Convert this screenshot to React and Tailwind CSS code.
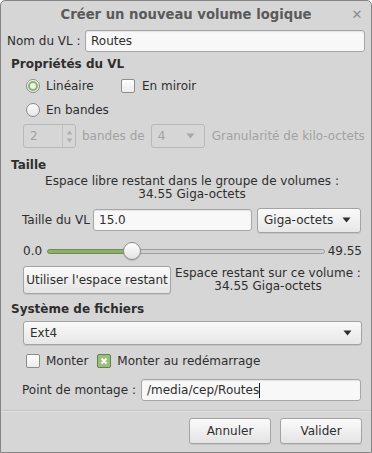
import React from 'react';

const font = { fontFamily: '"DejaVu Sans", Verdana, sans-serif' };

function Radio({ checked }) {
  return (
    <span className="w-[14px] h-[14px] rounded-full border border-[#8c8c8c] bg-gradient-to-b from-[#fbfbfb] to-[#e6e6e6] flex items-center justify-center shrink-0">
      {checked && (
        <span className="w-[10px] h-[10px] rounded-full border-[2px] border-[#8db36b] bg-[#eef3e8]" />
      )}
    </span>
  );
}

function Check({ checked }) {
  if (checked) {
    return (
      <span className="w-[14px] h-[14px] rounded-[2px] border border-[#62804a] bg-[#9cbf80] flex items-center justify-center shrink-0">
        <svg width="8" height="8" viewBox="0 0 8 8">
          <path d="M1.5 1.5 L6.5 6.5 M6.5 1.5 L1.5 6.5" stroke="#ffffff" strokeWidth="1.8" />
        </svg>
      </span>
    );
  }
  return <span className="w-[14px] h-[14px] rounded-[2px] border border-[#8c8c8c] bg-gradient-to-b from-[#fdfdfd] to-[#ececec] shrink-0" />;
}

function Arrow({ color = '#333' }) {
  return (
    <svg width="9" height="6" viewBox="0 0 9 6" className="shrink-0">
      <path d="M0.5 0.5 L8.5 0.5 L4.5 5.5 Z" fill={color} />
    </svg>
  );
}

function Combo({ label, className, disabled }) {
  return (
    <div
      className={`flex items-center justify-between rounded-[3px] border px-[6px] ${
        disabled
          ? 'border-[#b8b8b8] bg-[#d6d6d6] text-[#a2a2a2]'
          : 'border-[#a3a3a3] bg-gradient-to-b from-[#fafafa] to-[#e7e7e7] text-[#2e2e2e] shadow-[0_1px_0_rgba(0,0,0,0.08)]'
      } ${className}`}
    >
      <span>{label}</span>
      <span className="pr-[3px]">
        <Arrow color={disabled ? '#a8a8a8' : '#2e2e2e'} />
      </span>
    </div>
  );
}

function Field({ value, className, cursor }) {
  return (
    <div className={`flex items-center rounded-[3px] border border-[#a6a6a6] bg-[#f8f8f8] px-[5px] shadow-[inset_0_1px_1px_rgba(0,0,0,0.08)] ${className}`}>
      <span>{value}</span>
      {cursor && <span className="w-px h-[15px] bg-[#222]" />}
    </div>
  );
}

function Button({ children, className }) {
  return (
    <div className={`flex items-center justify-center rounded-[3px] border border-[#a3a3a3] bg-gradient-to-b from-[#fbfbfb] to-[#e4e4e4] shadow-[0_1px_0_rgba(0,0,0,0.08)] ${className}`}>
      {children}
    </div>
  );
}

export default function App() {
  return (
    <div
      style={font}
      className="w-[372px] h-[453px] bg-[#d6d6d6] border border-[#858585] rounded-t-[5px] text-[12px] text-[#2e2e2e] flex flex-col overflow-hidden"
    >
      {/* barre de titre */}
      <div className="h-[27px] flex items-center shrink-0">
        <div className="w-[28px]" />
        <div className="flex-1 text-center font-bold text-[13.2px] text-[#5a5a5a]">Créer un nouveau volume logique</div>
        <div className="w-[28px] flex justify-center text-[#8c8c8c] font-bold text-[13px]">✕</div>
      </div>

      {/* nom */}
      <div className="h-[26px] flex items-center pl-[6px] pr-[6px] shrink-0">
        <span className="w-[78px]">Nom du VL :</span>
        <Field value="Routes" className="flex-1 h-[22px]" />
      </div>

      <div className="h-[20px] flex items-center pl-[10px] font-bold shrink-0">Propriétés du VL</div>

      <div className="h-[23px] flex items-center pl-[25px] shrink-0">
        <Radio checked />
        <span className="ml-[6px] w-[75px]">Linéaire</span>
        <Check />
        <span className="ml-[7px]">En miroir</span>
      </div>

      <div className="h-[26px] flex items-center pl-[25px] shrink-0">
        <Radio />
        <span className="ml-[6px]">En bandes</span>
      </div>

      <div className="h-[26px] flex items-center pl-[22px] text-[#a2a2a2] shrink-0">
        <div className="w-[53px] h-[24px] rounded-[3px] border border-[#b8b8b8] flex">
          <span className="flex-1 flex items-center pl-[6px]">2</span>
          <div className="w-[13px] border-l border-[#c2c2c2] flex flex-col items-center justify-center gap-[3px]">
            <svg width="7" height="5" viewBox="0 0 7 5"><path d="M0.5 4.5 L3.5 0.5 L6.5 4.5 Z" fill="#b0b0b0" /></svg>
            <svg width="7" height="5" viewBox="0 0 7 5"><path d="M0.5 0.5 L3.5 4.5 L6.5 0.5 Z" fill="#b0b0b0" /></svg>
          </div>
        </div>
        <span className="ml-[6px]">bandes de</span>
        <Combo label="4" disabled className="ml-[6px] w-[54px] h-[24px]" />
        <span className="ml-[7px]">Granularité de kilo-octets</span>
      </div>

      <div className="mt-[6px] h-[20px] flex items-center pl-[10px] font-bold shrink-0">Taille</div>

      <div className="h-[26px] pl-[21px] pr-[9px] flex flex-col items-center justify-center leading-[13px] shrink-0">
        <span>Espace libre restant dans le groupe de volumes :</span>
        <span>34.55 Giga-octets</span>
      </div>

      <div className="mt-[7px] h-[24px] flex items-center pl-[21px] pr-[10px] shrink-0">
        <span className="w-[71px]">Taille du VL</span>
        <Field value="15.0" className="w-[159px] h-[22px]" />
        <Combo label="Giga-octets" className="ml-[5px] flex-1 h-[25px]" />
      </div>

      <div className="mt-[9px] h-[20px] flex items-center pl-[22px] pr-[9px] shrink-0">
        <span>0.0</span>
        <div className="ml-[5px] flex-1 flex items-center h-[18px]">
          <div className="w-[85px] h-[5px] rounded-l-full bg-[#8fae6d] border border-[#6f8c54]" />
          <div className="w-[18px] h-[18px] -mx-[9px] z-10 rounded-full border border-[#8c8c8c] bg-gradient-to-b from-[#ffffff] to-[#e2e2e2] shadow-[0_1px_1px_rgba(0,0,0,0.15)]" />
          <div className="flex-1 h-[5px] rounded-r-full bg-[#cfcfcf] border border-[#9e9e9e]" />
        </div>
        <span className="ml-[3px]">49.55</span>
      </div>

      <div className="mt-[5px] h-[28px] flex items-center pl-[22px] pr-[9px] shrink-0">
        <Button className="w-[148px] h-[28px]">Utiliser l'espace restant</Button>
        <div className="flex-1 flex flex-col items-center leading-[13px] pl-[3px]">
          <span>Espace restant sur ce volume :</span>
          <span>34.55 Giga-octets</span>
        </div>
      </div>

      <div className="mt-[5px] h-[20px] flex items-center pl-[10px] font-bold shrink-0">Système de fichiers</div>

      <div className="mt-[2px] h-[24px] flex pl-[22px] pr-[9px] shrink-0">
        <Combo label="Ext4" className="flex-1 h-[24px]" />
      </div>

      <div className="mt-[5px] h-[22px] flex items-center pl-[25px] shrink-0">
        <Check />
        <span className="ml-[6px]">Monter</span>
        <span className="ml-[9px]">
          <Check checked />
        </span>
        <span className="ml-[6px]">Monter au redémarrage</span>
      </div>

      <div className="mt-[7px] h-[22px] flex items-center pl-[21px] pr-[10px] shrink-0">
        <span className="w-[119px]">Point de montage :</span>
        <Field value="/media/cep/Routes" cursor className="flex-1 h-[22px]" />
      </div>

      <div className="mt-[9px] h-px bg-[#c3c3c3] border-b border-[#e2e2e2] box-content shrink-0" />

      <div className="mt-[6px] h-[26px] flex justify-end gap-[9px] pr-[9px] shrink-0">
        <Button className="w-[82px] h-[26px]">Annuler</Button>
        <Button className="w-[82px] h-[26px]">Valider</Button>
      </div>
    </div>
  );
}
